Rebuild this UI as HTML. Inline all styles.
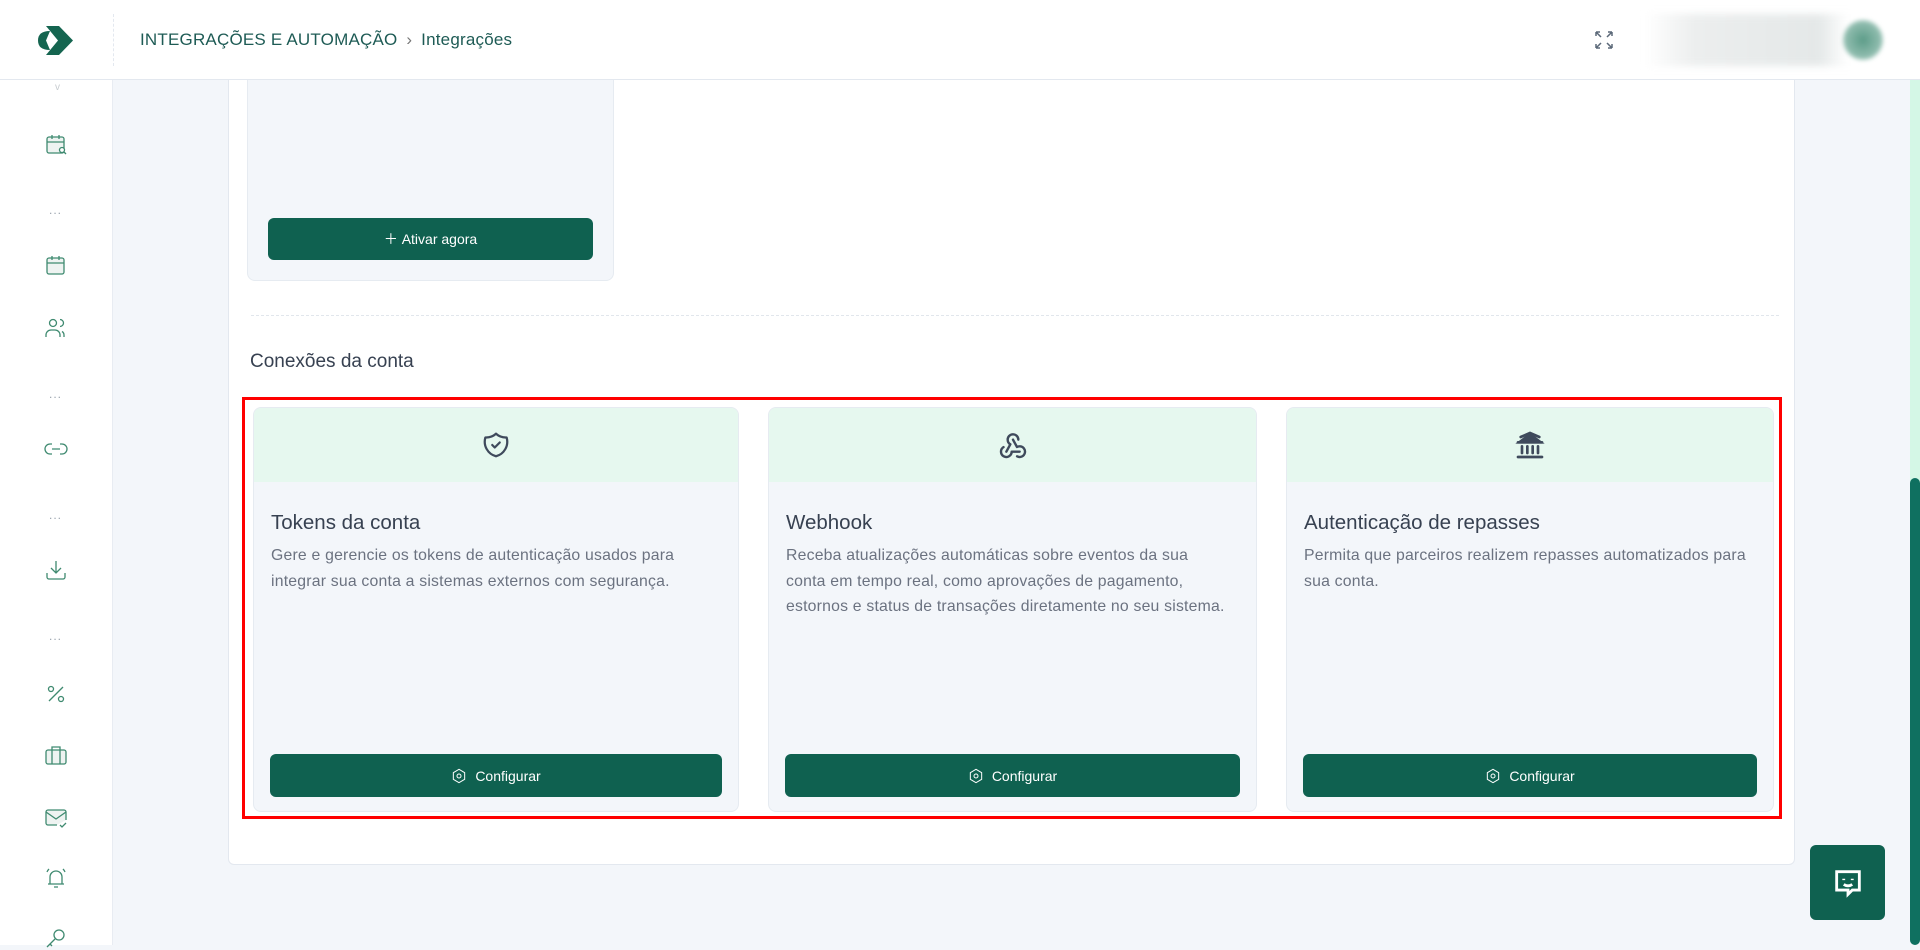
<!DOCTYPE html>
<html><head><meta charset="utf-8"><style>
*{box-sizing:border-box;margin:0;padding:0}
body{width:1920px;height:945px;overflow:hidden;background:#f3f6fa;font-family:"Liberation Sans",sans-serif;position:relative}
.hdr{position:absolute;left:0;top:0;width:1920px;height:80px;background:#fff;border-bottom:1px solid #e3e8ef;z-index:5}
.side{position:absolute;left:0;top:80px;width:113px;height:865px;background:#fff;border-right:1px solid #e8ecf2}
.ic{position:absolute;left:44px}
.dots{position:absolute;left:49px;color:#9aa3ad;font-size:12px;letter-spacing:1px}
.panel{position:absolute;left:228px;top:60px;width:1567px;height:805px;background:#fff;border:1px solid #e3e8ef;border-radius:6px}
.card{position:absolute;background:#f3f6fa;border:1px solid #e6ebf1;border-radius:8px;overflow:hidden}
.band{height:74px;background:#e6f8ef;display:flex;align-items:center;justify-content:center}
.card h3{position:absolute;left:17px;top:103px;font-size:20.5px;font-weight:normal;color:#374151}
.card p{position:absolute;left:17px;top:135px;width:470px;white-space:nowrap;font-size:15.8px;line-height:25.5px;color:#6b7280;letter-spacing:.2px}
.btn{position:absolute;left:16px;right:16px;bottom:14px;height:43px;background:#0f6150;border-radius:6px;color:#fff;font-size:14px;display:flex;align-items:center;justify-content:center;gap:8px}
</style></head><body>
<div class="hdr">
 <svg style="position:absolute;left:36px;top:22px" width="40" height="37" viewBox="0 0 40 37"><path d="M10 4 L23 4 L37 18.5 L23 33 L10 33 L22 18.5 Z" fill="#156550"/><path d="M14 9 Q2 9 2 18.5 Q2 28 14 28 L10 18.5 Z" fill="#156550"/></svg>
 <div style="position:absolute;left:113px;top:14px;height:52px;border-left:1px dashed #e3e8ef"></div>
 <div style="position:absolute;left:140px;top:30px;font-size:17px;color:#1e5b55;letter-spacing:.2px">INTEGRAÇÕES E AUTOMAÇÃO <span style="color:#777;margin:0 4px">›</span> Integrações</div>
 <svg style="position:absolute;left:1594px;top:30px" width="20" height="20" viewBox="0 0 20 20" fill="none" stroke="#5b6878" stroke-width="1.5"><path d="M2 2l5 5M2 2h4M2 2v4M18 2l-5 5M18 2h-4M18 2v4M2 18l5-5M2 18h4M2 18v-4M18 18l-5-5M18 18h-4M18 18v-4"/></svg>
 <div style="position:absolute;left:1645px;top:14px;width:248px;height:52px;background:linear-gradient(90deg,#fff 0%,#eceeee 20%,#e4e8e8 70%,#fff 82%,#fff);filter:blur(4px)"></div>
 <div style="position:absolute;left:1843px;top:20px;width:40px;height:40px;border-radius:50%;background:radial-gradient(#5c9c88,#8fbcae 60%,#fff 100%);filter:blur(2px)"></div>
</div>
<div style="position:absolute;left:1910px;top:0;width:10px;height:945px;background:#d4f7e6;border-radius:5px"></div>
<div style="position:absolute;left:1910px;top:478px;width:10px;height:467px;background:#0f7060;border-radius:5px"></div>

<div class="side">
 <div style="position:absolute;left:55px;top:2px;color:#c7ccd0;font-size:10px">v</div>
 <svg class="ic" style="top:52px" width="24" height="24" viewBox="0 0 24 24" fill="none" stroke="#3f8a70" stroke-width="1.3"><rect x="3" y="5" width="17" height="16" rx="2" fill="#eef3f1"/><path d="M3 10h17M8 3v4M15 3v4"/><circle cx="18" cy="18" r="2.5" fill="#fff"/><path d="M20 20l2 2"/></svg>
 <div class="dots" style="top:123px">...</div>
 <svg class="ic" style="top:173px" width="24" height="24" viewBox="0 0 24 24" fill="none" stroke="#3f8a70" stroke-width="1.3"><rect x="3" y="5" width="17" height="16" rx="2" fill="#eef3f1"/><path d="M3 10h17M8 3v4M15 3v4"/></svg>
 <svg class="ic" style="top:236px" width="24" height="24" viewBox="0 0 24 24" fill="none" stroke="#3f8a70" stroke-width="1.3"><circle cx="9" cy="7" r="3.5"/><path d="M2 21v-2a5 5 0 0 1 5-5h4a5 5 0 0 1 5 5v2M16 3.5a3.5 3.5 0 0 1 0 7M20 21v-2a4 4 0 0 0-2-3.5"/></svg>
 <div class="dots" style="top:307px">...</div>
 <svg class="ic" style="top:357px" width="24" height="24" viewBox="0 0 24 24" fill="none" stroke="#3f8a70" stroke-width="1.3"><path d="M8 7H6a5 5 0 0 0 0 10h2M16 7h2a5 5 0 0 1 0 10h-2M8 12h8"/></svg>
 <div class="dots" style="top:428px">...</div>
 <svg class="ic" style="top:478px" width="24" height="24" viewBox="0 0 24 24" fill="none" stroke="#3f8a70" stroke-width="1.3"><path d="M12 3v12M7 10l5 5 5-5M3 15v4a2 2 0 0 0 2 2h14a2 2 0 0 0 2-2v-4"/></svg>
 <div class="dots" style="top:549px">...</div>
 <svg class="ic" style="top:602px" width="24" height="24" viewBox="0 0 24 24" fill="none" stroke="#3f8a70" stroke-width="1.3"><path d="M5 19L19 5"/><circle cx="7" cy="7" r="2.5"/><circle cx="17" cy="17" r="2.5"/></svg>
 <svg class="ic" style="top:663px" width="24" height="24" viewBox="0 0 24 24" fill="none" stroke="#3f8a70" stroke-width="1.3"><rect x="2" y="7" width="20" height="14" rx="2" fill="#eef3f1"/><path d="M8 7V4h8v3M8 7v14M16 7v14"/></svg>
 <svg class="ic" style="top:726px" width="24" height="24" viewBox="0 0 24 24" fill="none" stroke="#3f8a70" stroke-width="1.3"><path d="M13 19H4a2 2 0 0 1-2-2V6a2 2 0 0 1 2-2h16a2 2 0 0 1 2 2v8" fill="#eef3f1"/><path d="M2 6l10 7 10-7M16 19l2 2 4-4"/></svg>
 <svg class="ic" style="top:786px" width="24" height="24" viewBox="0 0 24 24" fill="none" stroke="#3f8a70" stroke-width="1.3"><path d="M6 18V11a6 6 0 0 1 12 0v7M4 18h16M10 21h4M3 6a9 9 0 0 1 2-3M21 6a9 9 0 0 0-2-3"/></svg>
 <svg class="ic" style="top:846px" width="24" height="24" viewBox="0 0 24 24" fill="none" stroke="#3f8a70" stroke-width="1.3"><circle cx="15" cy="9" r="5"/><path d="M11 13l-8 8M6 18l2 2"/></svg>
</div>

<div class="panel">
 <div class="card" style="left:18px;top:-10px;width:367px;height:230px;background:#f3f6fa">
  <div class="btn" style="bottom:20px;height:42px;left:20px;right:20px">＋&nbsp;Ativar agora</div>
 </div>
 <div style="position:absolute;left:22px;top:254px;width:1528px;border-top:1px dashed #e1e6ec"></div>
 <div style="position:absolute;left:21px;top:290px;font-size:19px;color:#374151">Conexões da conta</div>
 <div style="position:absolute;left:13px;top:336px;width:1540px;height:422px;border:3px solid #ff0000"></div>
 <div class="card" style="left:24px;top:346px;width:486px;height:405px">
  <div class="band"><svg width="30" height="30" viewBox="0 0 24 24" fill="none" stroke="#3f4a5c" stroke-width="1.8" stroke-linecap="round" stroke-linejoin="round"><path d="M12 3a12 12 0 0 0 8.5 3A12 12 0 0 1 12 21 12 12 0 0 1 3.5 6 12 12 0 0 0 12 3"/><path d="M9 12l2 2 4-4"/></svg></div>
  <h3>Tokens da conta</h3>
  <p>Gere e gerencie os tokens de autenticação usados para<br>integrar sua conta a sistemas externos com segurança.</p>
  <div class="btn"><svg width="16" height="16" viewBox="0 0 24 24" fill="none" stroke="#fff" stroke-width="1.5"><path d="M12 2l8.5 5v10L12 22l-8.5-5V7z"/><circle cx="12" cy="12" r="3"/></svg>Configurar</div>
 </div>
 <div class="card" style="left:539px;top:346px;width:489px;height:405px">
  <div class="band"><svg width="32" height="32" viewBox="0 0 24 24" fill="none" stroke="#3f4a5c" stroke-width="1.8" stroke-linecap="round" stroke-linejoin="round"><path d="M4.876 13.61a4 4 0 1 0 6.124 3.39h6"/><path d="M15.066 20.502a4 4 0 1 0 1.934-7.502c-.706 0-1.424.179-2 .5l-3-5.5"/><path d="M16 8a4 4 0 1 0-8 0c0 1.506.77 2.818 2 3.5l-3 5.5"/></svg></div>
  <h3>Webhook</h3>
  <p>Receba atualizações automáticas sobre eventos da sua<br>conta em tempo real, como aprovações de pagamento,<br>estornos e status de transações diretamente no seu sistema.</p>
  <div class="btn"><svg width="16" height="16" viewBox="0 0 24 24" fill="none" stroke="#fff" stroke-width="1.5"><path d="M12 2l8.5 5v10L12 22l-8.5-5V7z"/><circle cx="12" cy="12" r="3"/></svg>Configurar</div>
 </div>
 <div class="card" style="left:1057px;top:346px;width:488px;height:405px">
  <div class="band"><svg width="32" height="32" viewBox="0 0 24 24" fill="none" stroke="#3f4a5c" stroke-width="2" stroke-linecap="round"><path d="M3 21h18M3 10h18M5 6l7-3 7 3" /><path d="M4 10h16L12 4z" fill="#3f4a5c"/><path d="M6 13v5M10 13v5M14 13v5M18 13v5"/></svg></div>
  <h3>Autenticação de repasses</h3>
  <p>Permita que parceiros realizem repasses automatizados para<br>sua conta.</p>
  <div class="btn"><svg width="16" height="16" viewBox="0 0 24 24" fill="none" stroke="#fff" stroke-width="1.5"><path d="M12 2l8.5 5v10L12 22l-8.5-5V7z"/><circle cx="12" cy="12" r="3"/></svg>Configurar</div>
 </div>
</div>

<div style="position:absolute;left:1810px;top:845px;width:75px;height:75px;background:#0f6150;border-radius:6px;display:flex;align-items:center;justify-content:center">
 <svg width="34" height="34" viewBox="0 0 24 24" fill="none" stroke="#fff" stroke-width="2"><path d="M4 4h16v13h-5l-3 3v-3H4z"/><path d="M9 9v1M15 9v1M9 13q3 2 6 0"/></svg>
</div>
</body></html>
